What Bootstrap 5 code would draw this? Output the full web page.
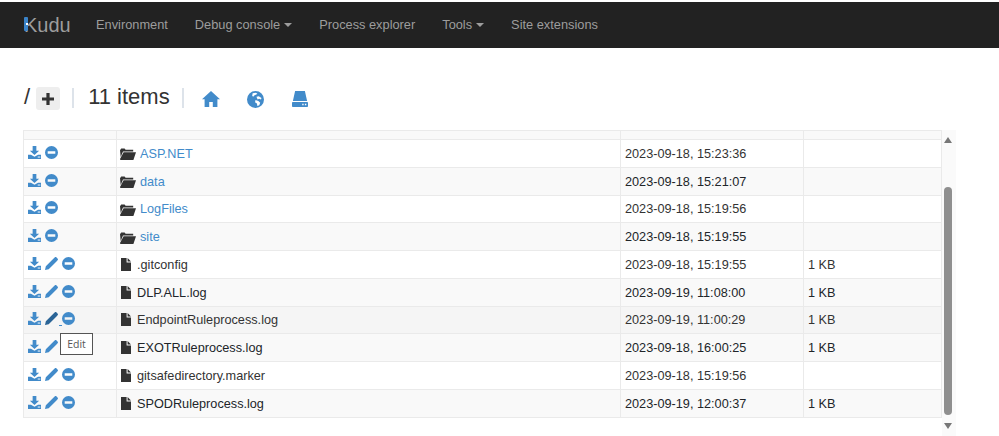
<!DOCTYPE html>
<html lang="en">
<head>
<meta charset="utf-8">
<title>Kudu</title>
<link href="https://cdn.jsdelivr.net/npm/bootstrap@5.3.0/dist/css/bootstrap.min.css" rel="stylesheet">
<style>
body{font-family:"Liberation Sans",Arial,sans-serif;color:#333;font-size:12.7px;background:#fff;height:436px;overflow:hidden}
.kd-bar{margin-top:2px;height:46px;background:#222;padding:0 0 0 24px}
.kd-brand{position:relative;font-size:20px;color:#9d9d9d;width:72px;line-height:46px;text-decoration:none}
.kd-brand i{position:absolute;left:0;top:15px;width:4px;height:14px;background:#3b84c9;border-radius:1px}
.kd-brand b{position:absolute;left:2px;top:21px;width:2px;height:2px;background:#fff}
.kd-link{color:#9d9d9d;font-size:12.8px;text-decoration:none;margin-right:27px}
.kd-caret{display:inline-block;margin-left:4px;vertical-align:2px;border-top:4px solid #9d9d9d;border-left:4px solid transparent;border-right:4px solid transparent}
.kd-head{height:82px;padding:39px 0 0 24px;font-size:22px;color:#333;line-height:20px}
.kd-plus{width:24px;height:23px;margin-left:6px;background:#eee;border-radius:3px}
.kd-sep{width:2px;height:20px;background:#dde3ea;margin:1px 14px 0 12px}
.kd-topicon{margin:4px 27px 0 0;display:block}
.kd-home{margin-left:4px}
.kd-globe{margin-right:28px}
.kd-wrap{height:306px;overflow:hidden;padding-left:23px}
.kd-tbox{width:918px}
.kd-table{--bs-table-striped-bg:#f9f9f9;--bs-table-border-color:#eaeaea;table-layout:fixed;width:918px;margin:0}
.kd-c1{width:93px}.kd-c2{width:504px}.kd-c3{width:183px}.kd-c4{width:138px}
.kd-table td{height:27.75px;padding:2px 4px 0;vertical-align:middle;font-size:12.7px;line-height:15px;color:#333;border-color:#eaeaea}
.kd-table td:first-child{padding:0 4px 2px}
.kd-table tr.kd-clip td{height:9px;padding:0}
.kd-table tr.kd-hot td{--bs-table-accent-bg:#f5f5f5}
.kd-table a{color:#428bca;text-decoration:none}
.kd-acts{position:relative}
.kd-acts svg,.kd-name svg{display:block;flex:none}
.kd-fold{margin:0 4px 0 -1px}
.kd-file{margin:-2px 6px 0 0}
.kd-tip{position:absolute;left:32px;top:21px;width:33px;height:22px;background:#fff;border:1px solid #555;color:#555;font-family:"Open Sans",sans-serif;font-size:10.5px;line-height:20px;text-align:center;z-index:2}
.kd-under{position:absolute;left:31px;top:13px;width:3px;height:1px;background:#428bca}
.kd-blue{color:#428bca}
.kd-dark{color:#2a6496}
.kd-scroll{width:14px;height:306px;margin-left:1px;background:#fafafa;position:relative;flex:none}
.kd-up,.kd-down{position:absolute;left:2px;width:0;height:0;border-left:4px solid transparent;border-right:4px solid transparent}
.kd-up{top:7px;border-bottom:6px solid #777}
.kd-down{top:293px;border-top:6px solid #777}
.kd-thumb{position:absolute;left:2px;top:57px;width:8px;height:228px;background:#8f8f8f;border-radius:4px}
</style>
</head>
<body>
<svg width="0" height="0" class="position-absolute">
<defs>
<symbol id="i-dl" viewBox="0 0 14 14"><path fill="#428bca" d="M5 0h4v5h3L7 9.600 2 5h3zM0 9.500h3.200L7 11.600l3.800-2.100H14V14H0z"/><rect x="10.500" y="11.300" width="1.200" height="1.200" fill="#fff"/><rect x="12" y="11.300" width="1.200" height="1.200" fill="#fff"/></symbol>
<symbol id="i-ed" viewBox="0 0 14 14"><path fill="currentColor" d="M0 14l.9-4L9.800 1.100l3.100 3.100L4 13.100zM10.600.4c.5-.5 1.200-.5 1.600-.1l1.500 1.500c.4.4.4 1.100-.1 1.600l-.9.9-3-3z"/></symbol>
<symbol id="i-mi" viewBox="0 0 13 13"><path fill="#428bca" d="M6.500 0a6.500 6.500 0 1 0 0 13 6.500 6.500 0 0 0 0-13zM2.700 5.300h7.600v2.400H2.700z" fill-rule="evenodd"/></symbol>
<symbol id="i-fo" viewBox="0 0 16 12"><path fill="#333" d="M0 2.200 1.200.6h3.400l1 1.200h7.600v1.600H3L.7 9zM3.600 4.200H16l-2.600 7.800H.4L0 11z"/></symbol>
<symbol id="i-fi" viewBox="0 0 10 13"><path fill="#333" d="M0 0h5.600v4.400H10V13H0zM6.600 0 10 3.400H6.600z"/></symbol>
</defs>
</svg>

<nav class="kd-bar d-flex align-items-center">
  <a class="kd-brand" href="#"><i></i><b></b>Kudu</a>
  <a class="kd-link" href="#">Environment</a>
  <a class="kd-link" href="#">Debug console<span class="kd-caret"></span></a>
  <a class="kd-link" href="#">Process explorer</a>
  <a class="kd-link" href="#">Tools<span class="kd-caret"></span></a>
  <a class="kd-link" href="#">Site extensions</a>
</nav>

<div class="kd-head d-flex align-items-start">
  <span>/</span>
  <span class="kd-plus d-flex align-items-center justify-content-center"><svg width="12" height="12" viewBox="0 0 12 12"><path fill="#333" d="M4.400 0h3.200v4.400H12v3.200H7.600V12H4.400V7.600H0V4.400h4.400z"/></svg></span>
  <span class="kd-sep"></span>
  <span>11 items</span>
  <span class="kd-sep"></span>
  <svg class="kd-topicon kd-home" width="18" height="16" viewBox="0 0 18 16"><path fill="#428bca" d="M9 0 18 8.300h-2.600V16h-4.600v-5H7.200v5H2.600V8.300H0z"/></svg>
  <svg class="kd-topicon kd-globe" width="17" height="17" viewBox="0 0 18 18"><path fill="#428bca" fill-rule="evenodd" d="M9 0a9 9 0 1 0 0 18A9 9 0 0 0 9 0zM6 2.500l3-.7 2 .8-1 1.200L8 4.500 6.500 6l-1-1zM10 6l2.500-.5 2.800 2-.5 1.500-2-.7-1.500.7zM9 9.500l3 1 2 2-1 2.500-2 .8-.5-2.500L8.500 12z"/></svg>
  <svg class="kd-topicon" width="16" height="16" viewBox="0 0 18 19" preserveAspectRatio="none"><path fill="#428bca" fill-rule="evenodd" d="M3.500 0h11L17 12H1zM1.200 13h15.600c.7 0 1.200.5 1.200 1.200v3.600c0 .7-.5 1.200-1.200 1.200H1.200C.5 19 0 18.500 0 17.800v-3.600C0 13.500.5 13 1.200 13zM11.500 15v2h1.600v-2zM14.500 15v2h1.600v-2z"/></svg>
</div>

<div class="kd-wrap d-flex">
  <div class="kd-tbox">
    <table class="table table-bordered table-striped kd-table">
      <colgroup><col class="kd-c1"><col class="kd-c2"><col class="kd-c3"><col class="kd-c4"></colgroup>
      <tbody>
        <tr class="kd-clip"><td></td><td></td><td></td><td></td></tr>
        <tr><td><div class="kd-acts d-flex align-items-center gap-1"><svg width="13" height="13"><use href="#i-dl"/></svg><svg width="13" height="13"><use href="#i-mi"/></svg></div></td><td><div class="kd-name d-flex align-items-center"><svg class="kd-fold" width="16" height="12"><use href="#i-fo"/></svg><a href="#">ASP.NET</a></div></td><td>2023-09-18, 15:23:36</td><td></td></tr>
        <tr><td><div class="kd-acts d-flex align-items-center gap-1"><svg width="13" height="13"><use href="#i-dl"/></svg><svg width="13" height="13"><use href="#i-mi"/></svg></div></td><td><div class="kd-name d-flex align-items-center"><svg class="kd-fold" width="16" height="12"><use href="#i-fo"/></svg><a href="#">data</a></div></td><td>2023-09-18, 15:21:07</td><td></td></tr>
        <tr><td><div class="kd-acts d-flex align-items-center gap-1"><svg width="13" height="13"><use href="#i-dl"/></svg><svg width="13" height="13"><use href="#i-mi"/></svg></div></td><td><div class="kd-name d-flex align-items-center"><svg class="kd-fold" width="16" height="12"><use href="#i-fo"/></svg><a href="#">LogFiles</a></div></td><td>2023-09-18, 15:19:56</td><td></td></tr>
        <tr><td><div class="kd-acts d-flex align-items-center gap-1"><svg width="13" height="13"><use href="#i-dl"/></svg><svg width="13" height="13"><use href="#i-mi"/></svg></div></td><td><div class="kd-name d-flex align-items-center"><svg class="kd-fold" width="16" height="12"><use href="#i-fo"/></svg><a href="#">site</a></div></td><td>2023-09-18, 15:19:55</td><td></td></tr>
        <tr><td><div class="kd-acts d-flex align-items-center gap-1"><svg width="13" height="13"><use href="#i-dl"/></svg><svg class="kd-blue" width="13" height="13"><use href="#i-ed"/></svg><svg width="13" height="13"><use href="#i-mi"/></svg></div></td><td><div class="kd-name d-flex align-items-center"><svg class="kd-file" width="10" height="13"><use href="#i-fi"/></svg>.gitconfig</div></td><td>2023-09-18, 15:19:55</td><td>1 KB</td></tr>
        <tr><td><div class="kd-acts d-flex align-items-center gap-1"><svg width="13" height="13"><use href="#i-dl"/></svg><svg class="kd-blue" width="13" height="13"><use href="#i-ed"/></svg><svg width="13" height="13"><use href="#i-mi"/></svg></div></td><td><div class="kd-name d-flex align-items-center"><svg class="kd-file" width="10" height="13"><use href="#i-fi"/></svg>DLP.ALL.log</div></td><td>2023-09-19, 11:08:00</td><td>1 KB</td></tr>
        <tr class="kd-hot"><td><div class="kd-acts d-flex align-items-center gap-1"><svg width="13" height="13"><use href="#i-dl"/></svg><svg class="kd-dark" width="13" height="13"><use href="#i-ed"/></svg><svg width="13" height="13"><use href="#i-mi"/></svg><span class="kd-under"></span><span class="kd-tip">Edit</span></div></td><td><div class="kd-name d-flex align-items-center"><svg class="kd-file" width="10" height="13"><use href="#i-fi"/></svg>EndpointRuleprocess.log</div></td><td>2023-09-19, 11:00:29</td><td>1 KB</td></tr>
        <tr><td><div class="kd-acts d-flex align-items-center gap-1"><svg width="13" height="13"><use href="#i-dl"/></svg><svg class="kd-blue" width="13" height="13"><use href="#i-ed"/></svg><svg width="13" height="13"><use href="#i-mi"/></svg></div></td><td><div class="kd-name d-flex align-items-center"><svg class="kd-file" width="10" height="13"><use href="#i-fi"/></svg>EXOTRuleprocess.log</div></td><td>2023-09-18, 16:00:25</td><td>1 KB</td></tr>
        <tr><td><div class="kd-acts d-flex align-items-center gap-1"><svg width="13" height="13"><use href="#i-dl"/></svg><svg class="kd-blue" width="13" height="13"><use href="#i-ed"/></svg><svg width="13" height="13"><use href="#i-mi"/></svg></div></td><td><div class="kd-name d-flex align-items-center"><svg class="kd-file" width="10" height="13"><use href="#i-fi"/></svg>gitsafedirectory.marker</div></td><td>2023-09-18, 15:19:56</td><td></td></tr>
        <tr><td><div class="kd-acts d-flex align-items-center gap-1"><svg width="13" height="13"><use href="#i-dl"/></svg><svg class="kd-blue" width="13" height="13"><use href="#i-ed"/></svg><svg width="13" height="13"><use href="#i-mi"/></svg></div></td><td><div class="kd-name d-flex align-items-center"><svg class="kd-file" width="10" height="13"><use href="#i-fi"/></svg>SPODRuleprocess.log</div></td><td>2023-09-19, 12:00:37</td><td>1 KB</td></tr>
      </tbody>
    </table>
  </div>
  <div class="kd-scroll"><span class="kd-up"></span><span class="kd-thumb"></span><span class="kd-down"></span></div>
</div>
<script src="https://cdn.jsdelivr.net/npm/bootstrap@5.3.0/dist/js/bootstrap.bundle.min.js"></script>
</body>
</html>
